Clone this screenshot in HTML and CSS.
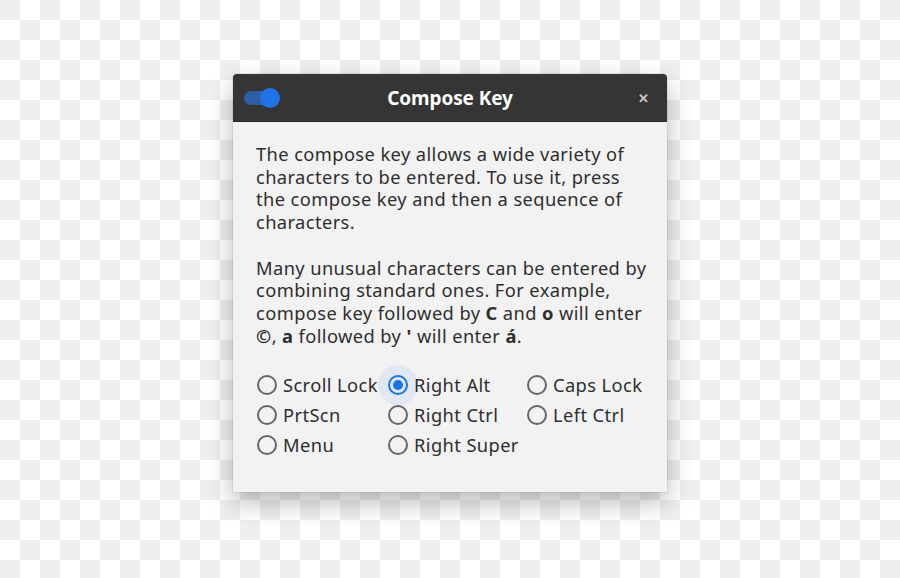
FILE: index.html
```html
<!DOCTYPE html>
<html lang="en">
  <head>
    <meta charset="UTF-8" />
    <meta name="viewport" content="width=device-width, initial-scale=1.0" />
    <title>Compose Key</title>
    <link rel="stylesheet" href="styles.css">
  </head>
  <body>
    <div class="window">
      <div class="titlebar">
        <span class="switch"><span class="knob"></span></span>
        <h1>Compose Key</h1>
        <span class="close">&#x2715;</span>
      </div>
      <div class="content">
        <p>The compose key allows a wide variety of<br />characters to be entered. To use it, press<br />the compose key and then a sequence of<br />characters.</p>
        <p>Many unusual characters can be entered by<br />combining standard ones. For example,<br />compose key followed by <b>C</b> and <b>o</b> will enter<br /><b>&copy;</b>, <b>a</b> followed by <b>'</b> will enter <b>&aacute;</b>.</p>
        <div class="options">
          <label class="option"><span class="radio"></span>Scroll Lock</label>
          <label class="option active"><span class="radio checked"></span>Right Alt</label>
          <label class="option"><span class="radio"></span>Caps Lock</label>
          <label class="option"><span class="radio"></span>PrtScn</label>
          <label class="option"><span class="radio"></span>Right Ctrl</label>
          <label class="option"><span class="radio"></span>Left Ctrl</label>
          <label class="option"><span class="radio"></span>Menu</label>
          <label class="option"><span class="radio"></span>Right Super</label>
        </div>
      </div>
    </div>
  </body>
</html>
```

FILE: styles.css
```css
/* Page with transparent checkerboard */
body {
  margin: 0;
  height: 578px;
  font-family: "Noto Sans", "Open Sans", sans-serif;
  background-color: #ffffff;
  background-image:
    linear-gradient(45deg, #efefef 25%, transparent 25%, transparent 75%, #efefef 75%),
    linear-gradient(45deg, #efefef 25%, transparent 25%, transparent 75%, #efefef 75%);
  background-size: 40px 40px;
  background-position: 20px 0, 0 20px;
  display: flex;
  justify-content: center;
  align-items: flex-start;
  padding-top: 74px;
  box-sizing: border-box;
}

/* Dialog window */
.window {
  width: 434px;
  height: 418px;
  background-color: #f2f2f2;
  border-radius: 4px 4px 0 0;
  box-shadow: 0 10px 26px rgba(0, 0, 0, 0.28), 0 0 0 1px rgba(0, 0, 0, 0.06);
  overflow: hidden;
}

/* Title bar */
.titlebar {
  height: 48px;
  background-color: #353535;
  border-bottom: 1px solid #262626;
  display: flex;
  align-items: center;
  padding: 0 11px;
  box-sizing: border-box;
}

.titlebar h1 {
  flex: 1;
  margin: 0;
  text-align: center;
  color: #ffffff;
  font-size: 19px;
  font-weight: bold;
  letter-spacing: -0.1px;
}

.switch {
  position: relative;
  width: 26px;
  height: 14px;
  border-radius: 7px;
  background-color: #2b5ea6;
  margin-right: 10px;
}

.switch .knob {
  position: absolute;
  left: 16px;
  top: -3px;
  width: 20px;
  height: 20px;
  border-radius: 50%;
  background-color: #1e74e6;
}

.close {
  width: 26px;
  margin-left: 10px;
  text-align: center;
  color: #c8c8c8;
  font-size: 13px;
  font-weight: bold;
}

/* Body text */
.content {
  padding: 21px 23px 20px;
  color: #2e2e2e;
  font-size: 18.3px;
  letter-spacing: 0.4px;
  line-height: 22.7px;
}

.content p {
  margin: 0 0 22.7px 0;
  white-space: nowrap;
}

/* Radio options */
.options {
  display: grid;
  grid-template-columns: 131px 139px auto;
  grid-auto-rows: 30px;
  margin-left: 1px;
  margin-top: 23px;
}

.option {
  display: flex;
  align-items: center;
  gap: 6px;
  white-space: nowrap;
}

.radio {
  position: relative;
  width: 16px;
  height: 16px;
  border: 2px solid #666666;
  border-radius: 50%;
  flex-shrink: 0;
}

.option.active {
  position: relative;
  z-index: 0;
}

.option.active .radio::before {
  content: "";
  position: absolute;
  left: -12px;
  top: -12px;
  width: 40px;
  height: 40px;
  border-radius: 50%;
  background-color: #e1e8f3;
  z-index: -1;
}

.radio.checked {
  border-color: #1a73e8;
}

.radio.checked::after {
  content: "";
  position: absolute;
  left: 3px;
  top: 3px;
  width: 10px;
  height: 10px;
  border-radius: 50%;
  background-color: #1a73e8;
}
```
